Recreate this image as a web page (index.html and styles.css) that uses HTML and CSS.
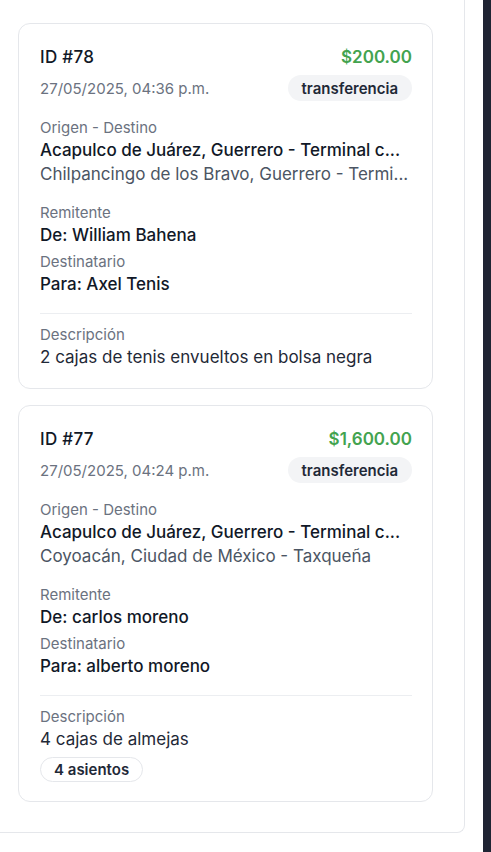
FILE: index.html
```html
<!DOCTYPE html>
<html lang="es">
<head>
<meta charset="utf-8">
<link rel="stylesheet" href="styles.css">
</head>
<body>
<div class="layout">
  <main class="panel">
    <div class="list">
      <article class="card">
        <div class="head">
          <span class="id">ID #78</span>
          <span class="amount">$200.00</span>
        </div>
        <div class="sub">
          <span class="date">27/05/2025, 04:36 p.m.</span>
          <span class="pill">transferencia</span>
        </div>
        <div class="block">
          <div class="label">Origen - Destino</div>
          <div class="value strong trunc">Acapulco de Juárez, Guerrero - Terminal c...</div>
          <div class="value muted trunc">Chilpancingo de los Bravo, Guerrero - Termi...</div>
        </div>
        <div class="block">
          <div class="label">Remitente</div>
          <div class="value strong">De: William Bahena</div>
          <div class="label second">Destinatario</div>
          <div class="value strong">Para: Axel Tenis</div>
        </div>
        <div class="desc">
          <div class="label">Descripción</div>
          <div class="value">2 cajas de tenis envueltos en bolsa negra</div>
        </div>
      </article>
      <article class="card">
        <div class="head">
          <span class="id">ID #77</span>
          <span class="amount">$1,600.00</span>
        </div>
        <div class="sub">
          <span class="date">27/05/2025, 04:24 p.m.</span>
          <span class="pill">transferencia</span>
        </div>
        <div class="block">
          <div class="label">Origen - Destino</div>
          <div class="value strong trunc">Acapulco de Juárez, Guerrero - Terminal c...</div>
          <div class="value muted trunc">Coyoacán, Ciudad de México - Taxqueña</div>
        </div>
        <div class="block">
          <div class="label">Remitente</div>
          <div class="value strong">De: carlos moreno</div>
          <div class="label second">Destinatario</div>
          <div class="value strong">Para: alberto moreno</div>
        </div>
        <div class="desc">
          <div class="label">Descripción</div>
          <div class="value">4 cajas de almejas</div>
          <span class="seats">4 asientos</span>
        </div>
      </article>
    </div>
  </main>
  <aside class="strip"></aside>
</div>
</body>
</html>
```

FILE: styles.css
```css
* { box-sizing: border-box; }
html, body { margin: 0; padding: 0; background: #ffffff; }
body {
  font-family: Inter, "Noto Sans", "Liberation Sans", sans-serif;
  color: #111827;
  -webkit-font-smoothing: antialiased;
}
.layout {
  display: flex;
  min-height: 852px;
}
.panel {
  width: 465px;
  align-self: flex-start;
  padding: 23px 31px 30px 18px;
  border-right: 1px solid #e5e7eb;
  border-bottom: 1px solid #e5e7eb;
  border-bottom-right-radius: 8px;
  background: #ffffff;
}
.strip {
  margin-left: auto;
  width: 8px;
  background: #1f2433;
}
.list {
  display: flex;
  flex-direction: column;
  gap: 16px;
}
.card {
  border: 1px solid #e5e7eb;
  border-radius: 12px;
  padding: 21px 20px 19px 21px;
  background: #fff;
}
.head {
  display: flex;
  justify-content: space-between;
  align-items: center;
  height: 24px;
}
.id {
  font-size: 17px;
  font-weight: 500;
  color: #111827;
  letter-spacing: 0.3px;
}
.amount {
  font-size: 17px;
  font-weight: 600;
  color: #43a34f;
}
.sub {
  display: flex;
  justify-content: space-between;
  align-items: center;
  margin-top: 6px;
}
.date {
  font-size: 15px;
  color: #6b7280;
}
.pill {
  display: inline-flex;
  align-items: center;
  height: 26px;
  padding: 0 14px;
  border-radius: 999px;
  background: #f3f4f6;
  font-size: 15px;
  font-weight: 600;
  color: #1f2937;
}
.block { margin-top: 16px; }
.label {
  font-size: 15px;
  line-height: 21px;
  color: #6b7280;
}
.label.second { margin-top: 4px; }
.value {
  font-size: 17px;
  line-height: 24px;
  color: #1f2937;
}
.value.strong { font-weight: 500; color: #111827; }
.value.muted { color: #4b5563; }
.trunc {
  white-space: nowrap;
  overflow: hidden;
  text-overflow: ellipsis;
}
.desc {
  margin-top: 17px;
  border-top: 1px solid #eceef1;
  padding-top: 10px;
}
.seats {
  display: inline-flex;
  align-items: center;
  height: 25px;
  margin-top: 6px;
  padding: 0 13px;
  border: 1px solid #e5e7eb;
  border-radius: 999px;
  font-size: 15px;
  font-weight: 600;
  color: #1f2937;
}
```
